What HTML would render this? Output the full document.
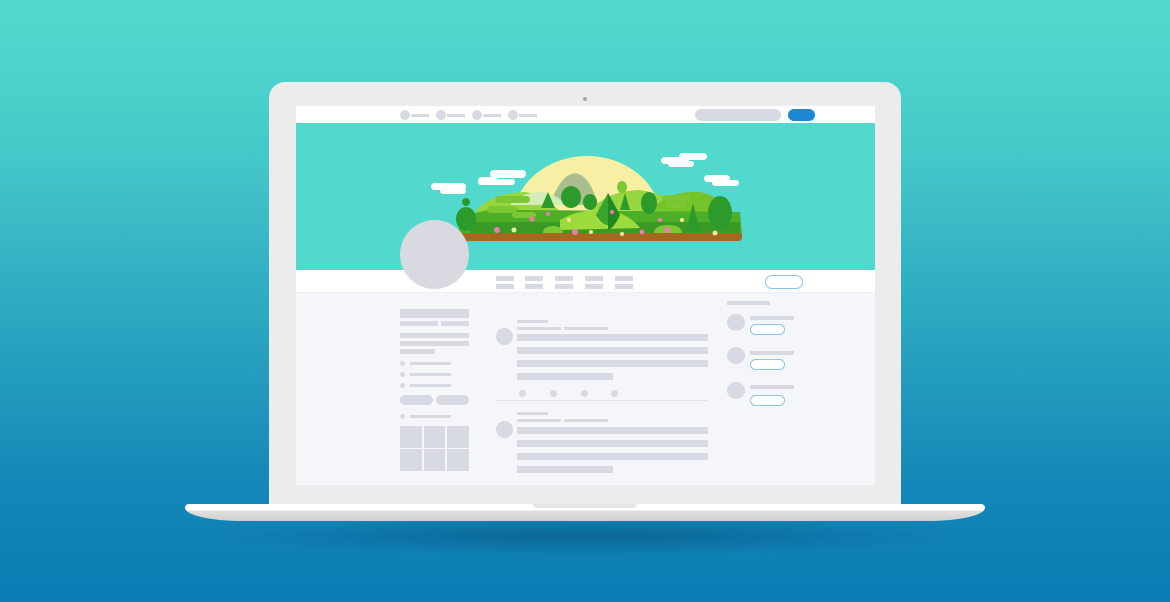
<!DOCTYPE html>
<html><head><meta charset="utf-8"><style>
*{margin:0;padding:0;box-sizing:border-box}
html,body{width:1170px;height:602px;overflow:hidden}
body{position:relative;background:linear-gradient(180deg,#53dbcd 0%,#45c9c9 25%,#2aa5c0 55%,#1587b8 80%,#0b7bb3 100%);font-family:"Liberation Sans",sans-serif}
div{position:absolute}
.g{background:#d8dae3}
.c{border-radius:50%;background:#d8dae3}
.p{border-radius:7px;border:1.5px solid #8cc4ee;background:#fff}
</style></head><body>
<div style="left:200px;top:516px;width:770px;height:40px;background:radial-gradient(ellipse at center,rgba(0,50,90,0.35),rgba(0,50,90,0) 70%)"></div>
<div style="left:269px;top:82px;width:632px;height:425px;background:#ececec;border-radius:16px 16px 0 0"></div>
<div style="left:583px;top:97px;width:4px;height:4px;border-radius:50%;background:#a8a8a8"></div>
<div style="left:296px;top:106px;width:579px;height:379px;background:#f5f6fa;overflow:hidden">
</div>
<!-- top nav -->
<div style="left:296px;top:106px;width:579px;height:17px;background:#fff"></div>
<div class="c" style="left:400px;top:110px;width:10px;height:10px"></div><div class="g" style="left:411px;top:114px;width:18px;height:3px"></div>
<div class="c" style="left:436px;top:110px;width:10px;height:10px"></div><div class="g" style="left:447px;top:114px;width:18px;height:3px"></div>
<div class="c" style="left:472px;top:110px;width:10px;height:10px"></div><div class="g" style="left:483px;top:114px;width:18px;height:3px"></div>
<div class="c" style="left:508px;top:110px;width:10px;height:10px"></div><div class="g" style="left:519px;top:114px;width:18px;height:3px"></div>
<div class="g" style="left:695px;top:109px;width:86px;height:12px;border-radius:6px"></div>
<div style="left:788px;top:109px;width:27px;height:12px;border-radius:6px;background:#1d87d2"></div>
<!-- cover -->
<div style="left:296px;top:123px;width:579px;height:147px;background:#50d9cc"></div>
<svg style="position:absolute;left:0;top:0" width="1170" height="602">
<g fill="#fff">
<rect x="431" y="183" width="35" height="7" rx="3.5"/><rect x="440" y="188" width="26" height="6" rx="3"/>
<rect x="478" y="177" width="20" height="7" rx="3.5"/><rect x="490" y="170" width="36" height="8" rx="4"/><rect x="478" y="179" width="37" height="6" rx="3"/>
<rect x="661" y="157" width="28" height="7" rx="3.5"/><rect x="679" y="153" width="28" height="7" rx="3.5"/><rect x="668" y="161" width="26" height="6" rx="3"/>
<rect x="704" y="175" width="26" height="7" rx="3.5"/><rect x="712" y="180" width="27" height="6" rx="3"/>
</g>
<path d="M513 220 A74 64 0 0 1 661 220Z" fill="#f7efa3"/>
<path d="M550 205 Q560 175 575 173 Q590 175 598 205Z" fill="#a8bf8d"/>
<path d="M475 212 Q490 193 525 192 Q545 195 560 212Z" fill="#97d640"/>
<path d="M510 205 Q520 193 540 192 Q560 195 565 205Z" fill="#d3ecb8"/>
<path d="M590 210 Q610 190 640 190 Q670 195 690 212Z" fill="#97d640"/>
<path d="M650 210 Q670 190 700 192 Q720 196 735 215Z" fill="#72c42a"/>
<path d="M460 222 Q480 205 520 210 L740 212 L742 235 L458 235Z" fill="#4fae28"/>
<rect x="470" y="222" width="270" height="12" fill="#3a9a25"/>
<path d="M560 220 Q580 208 610 210 Q630 215 640 228 L560 230Z" fill="#9ddb3c"/>
<g fill="#2d9b2b">
<ellipse cx="466" cy="219" rx="10" ry="12"/><circle cx="466" cy="202" r="4"/>
<ellipse cx="720" cy="213" rx="12" ry="17"/>
<path d="M608 193 L620 215 Q608 235 596 215Z" fill="#3aa52a"/>
<path d="M608 193 L620 215 Q614 228 608 230Z" fill="#1f8a1f"/>
<path d="M548 192 L555 208 L541 208Z"/><path d="M693 203 L700 232 L686 232Z"/>
<ellipse cx="571" cy="197" rx="10" ry="11"/><ellipse cx="590" cy="202" rx="7" ry="8"/>
<ellipse cx="649" cy="203" rx="8" ry="11"/><path d="M625 193 L630 210 L620 210Z"/>
</g>
<g fill="#7cc832"><rect x="495" y="196" width="35" height="7" rx="3.5"/><rect x="487" y="206" width="30" height="7" rx="3.5"/><rect x="512" y="212" width="24" height="6" rx="3"/><rect x="662" y="195" width="28" height="6" rx="3"/><rect x="665" y="202" width="22" height="6" rx="3"/>
<ellipse cx="553" cy="232" rx="10" ry="6"/><ellipse cx="668" cy="232" rx="14" ry="7"/><ellipse cx="622" cy="187" rx="5" ry="6"/></g>
<rect x="458" y="233" width="284" height="8" rx="3" fill="#a5681f"/>
<g fill="#f07bb4"><circle cx="497" cy="230" r="3"/><circle cx="532" cy="219" r="2.5"/><circle cx="575" cy="232" r="3"/><circle cx="642" cy="232" r="2.5"/><circle cx="667" cy="230" r="3"/><circle cx="548" cy="214" r="2"/><circle cx="612" cy="212" r="2"/><circle cx="660" cy="220" r="2"/></g>
<g fill="#f7e6a0"><circle cx="514" cy="230" r="2.5"/><circle cx="591" cy="232" r="2"/><circle cx="622" cy="234" r="2"/><circle cx="715" cy="233" r="2.5"/><circle cx="569" cy="220" r="2"/><circle cx="682" cy="220" r="2"/></g>
</svg>
<!-- profile nav -->
<div style="left:296px;top:270px;width:579px;height:23px;background:#fff;border-bottom:1px solid #eceef3"></div>
<div class="g" style="left:496px;top:276px;width:18px;height:5px"></div><div class="g" style="left:496px;top:284px;width:18px;height:5px"></div>
<div class="g" style="left:525px;top:276px;width:18px;height:5px"></div><div class="g" style="left:525px;top:284px;width:18px;height:5px"></div>
<div class="g" style="left:555px;top:276px;width:18px;height:5px"></div><div class="g" style="left:555px;top:284px;width:18px;height:5px"></div>
<div class="g" style="left:585px;top:276px;width:18px;height:5px"></div><div class="g" style="left:585px;top:284px;width:18px;height:5px"></div>
<div class="g" style="left:615px;top:276px;width:18px;height:5px"></div><div class="g" style="left:615px;top:284px;width:18px;height:5px"></div>
<div class="p" style="left:765px;top:275px;width:38px;height:14px"></div>
<div style="left:400px;top:220px;width:69px;height:69px;border-radius:50%;background:#d9d9e2"></div>
<!-- left column -->
<div class="g" style="left:400px;top:309px;width:69px;height:9px"></div>
<div class="g" style="left:400px;top:321px;width:38px;height:5px"></div><div class="g" style="left:441px;top:321px;width:28px;height:5px"></div>
<div class="g" style="left:400px;top:333px;width:69px;height:5px"></div>
<div class="g" style="left:400px;top:341px;width:69px;height:5px"></div>
<div class="g" style="left:400px;top:349px;width:35px;height:5px"></div>
<div class="c" style="left:400px;top:361px;width:5px;height:5px"></div><div class="g" style="left:410px;top:362px;width:41px;height:3px"></div>
<div class="c" style="left:400px;top:372px;width:5px;height:5px"></div><div class="g" style="left:410px;top:373px;width:41px;height:3px"></div>
<div class="c" style="left:400px;top:383px;width:5px;height:5px"></div><div class="g" style="left:410px;top:384px;width:41px;height:3px"></div>
<div class="g" style="left:400px;top:395px;width:33px;height:10px;border-radius:5px"></div><div class="g" style="left:436px;top:395px;width:33px;height:10px;border-radius:5px"></div>
<div class="c" style="left:400px;top:414px;width:5px;height:5px"></div><div class="g" style="left:410px;top:415px;width:41px;height:3px"></div>
<div class="g" style="left:400px;top:426px;width:22px;height:22px"></div><div class="g" style="left:424px;top:426px;width:21px;height:22px"></div><div class="g" style="left:447px;top:426px;width:22px;height:22px"></div>
<div class="g" style="left:400px;top:449px;width:22px;height:22px"></div><div class="g" style="left:424px;top:449px;width:21px;height:22px"></div><div class="g" style="left:447px;top:449px;width:22px;height:22px"></div>
<!-- posts -->
<div class="c" style="left:496px;top:328px;width:17px;height:17px"></div>
<div class="g" style="left:517px;top:320px;width:31px;height:3px"></div>
<div class="g" style="left:517px;top:327px;width:44px;height:3px"></div><div class="g" style="left:564px;top:327px;width:44px;height:3px"></div>
<div class="g" style="left:517px;top:334px;width:191px;height:7px"></div>
<div class="g" style="left:517px;top:347px;width:191px;height:7px"></div>
<div class="g" style="left:517px;top:360px;width:191px;height:7px"></div>
<div class="g" style="left:517px;top:373px;width:96px;height:7px"></div>
<div class="c" style="left:519px;top:390px;width:7px;height:7px"></div><div class="c" style="left:550px;top:390px;width:7px;height:7px"></div><div class="c" style="left:581px;top:390px;width:7px;height:7px"></div><div class="c" style="left:611px;top:390px;width:7px;height:7px"></div>
<div style="left:496px;top:400px;width:212px;height:1px;background:#e3e5ec"></div>
<div class="c" style="left:496px;top:421px;width:17px;height:17px"></div>
<div class="g" style="left:517px;top:412px;width:31px;height:3px"></div>
<div class="g" style="left:517px;top:419px;width:44px;height:3px"></div><div class="g" style="left:564px;top:419px;width:44px;height:3px"></div>
<div class="g" style="left:517px;top:427px;width:191px;height:7px"></div>
<div class="g" style="left:517px;top:440px;width:191px;height:7px"></div>
<div class="g" style="left:517px;top:453px;width:191px;height:7px"></div>
<div class="g" style="left:517px;top:466px;width:96px;height:7px"></div>
<!-- right -->
<div class="g" style="left:727px;top:301px;width:43px;height:4px"></div>
<div class="c" style="left:727px;top:314px;width:18px;height:17px"></div><div class="g" style="left:750px;top:316px;width:44px;height:4px"></div><div class="p" style="left:750px;top:324px;width:35px;height:11px"></div>
<div class="c" style="left:727px;top:347px;width:18px;height:17px"></div><div class="g" style="left:750px;top:351px;width:44px;height:4px"></div><div class="p" style="left:750px;top:359px;width:35px;height:11px"></div>
<div class="c" style="left:727px;top:382px;width:18px;height:17px"></div><div class="g" style="left:750px;top:385px;width:44px;height:4px"></div><div class="p" style="left:750px;top:395px;width:35px;height:11px"></div>
<!-- base -->
<div style="left:185px;top:504px;width:800px;height:17px;background:linear-gradient(180deg,#fff 0,#fff 6px,#e0e0e0 7px,#cfcfcf 100%);border-radius:4px 4px 60px 60px / 4px 4px 14px 14px"></div>
<div style="left:533px;top:504px;width:104px;height:4px;background:#e6e6e6;border-radius:0 0 8px 8px"></div>
</body></html>
